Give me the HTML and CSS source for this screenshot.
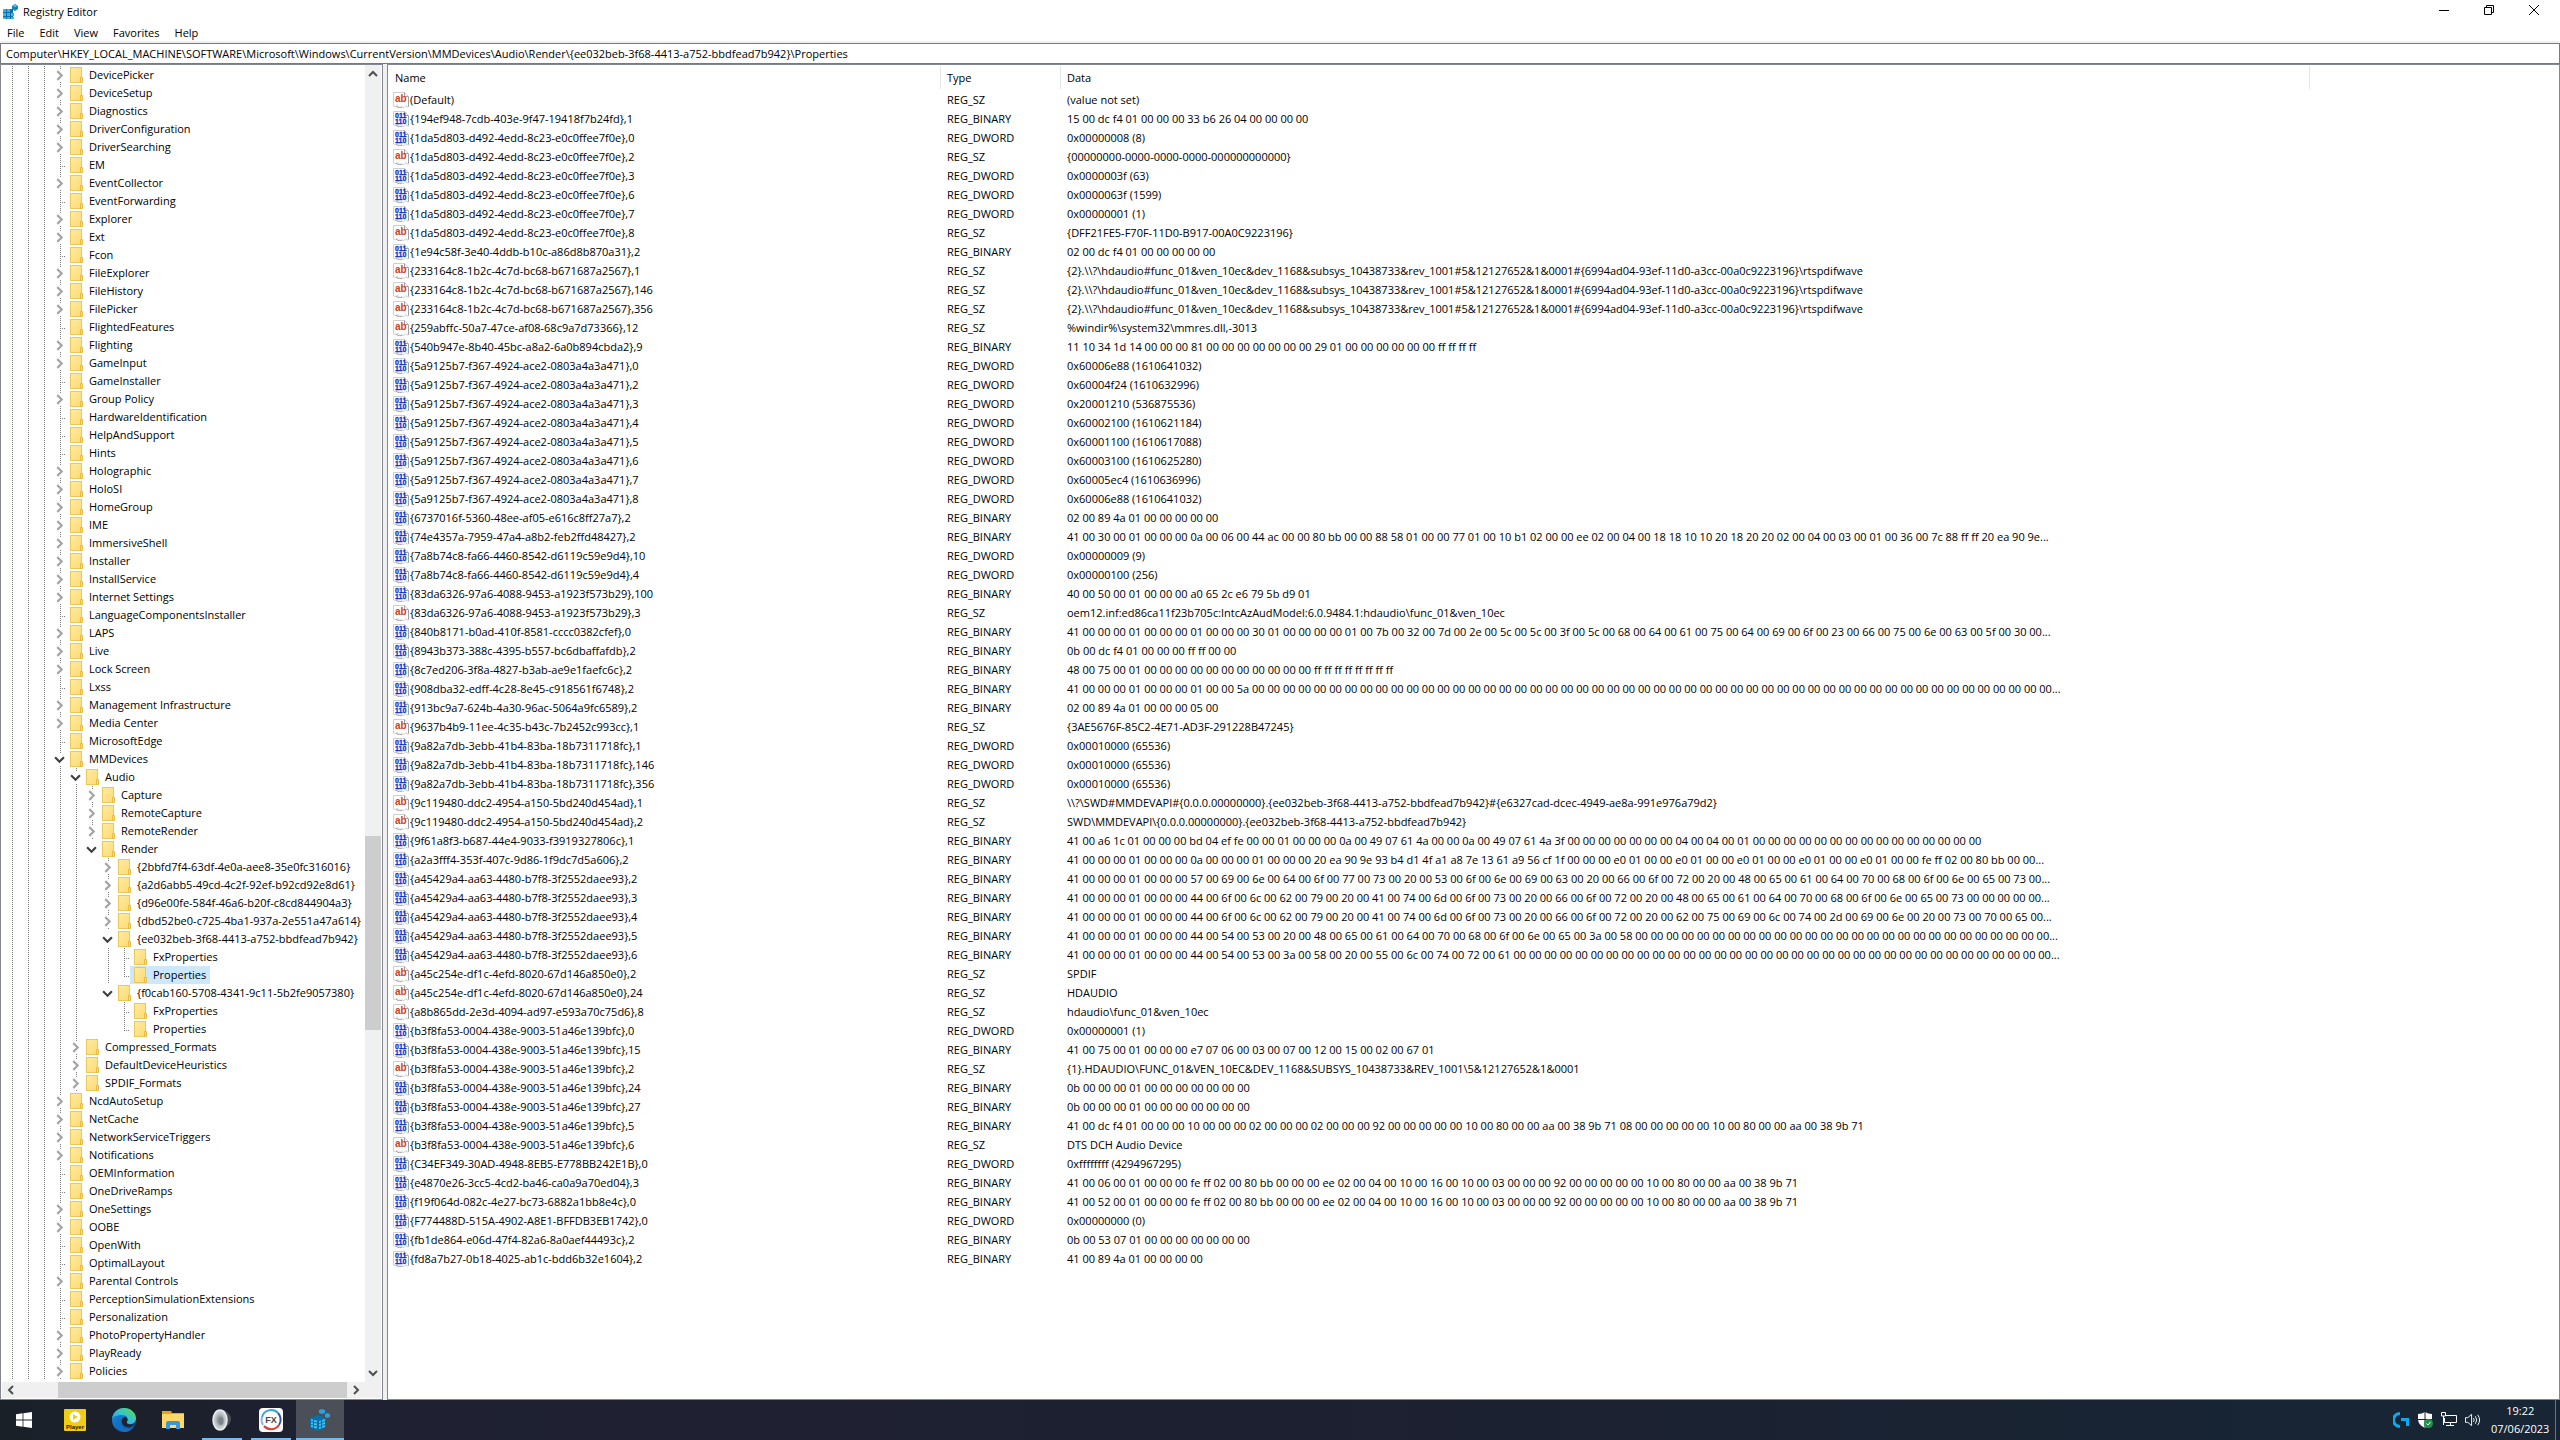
FILE: index.html
```html
<!DOCTYPE html>
<html lang="en">
<head>
<meta charset="utf-8">
<title>Registry Editor</title>
<link rel="stylesheet" href="styles.css">
</head>
<body>
<svg class="defs" aria-hidden="true">
  <defs>
    <linearGradient id="folder-fill" x1="0" y1="0" x2="1" y2="1"><stop offset="0" stop-color="#ffeba3"/><stop offset="1" stop-color="#fddb72"/></linearGradient>
    <linearGradient id="edge-a" x1="0" y1="1" x2="1" y2="0"><stop offset="0" stop-color="#1b9de2"/><stop offset=".5" stop-color="#35c1d0"/><stop offset="1" stop-color="#5be03f"/></linearGradient>
    <linearGradient id="edge-b" x1="0" y1="0" x2="1" y2="1"><stop offset="0" stop-color="#1b8fe0"/><stop offset="1" stop-color="#0b4a9c"/></linearGradient>
    <radialGradient id="cone"><stop offset="0" stop-color="#6c7378"/><stop offset=".5" stop-color="#aab1b5"/><stop offset="1" stop-color="#dfe3e5"/></radialGradient>
    <symbol id="folder" viewBox="0 0 13 16"><rect x=".5" y=".5" width="11" height="15" fill="url(#folder-fill)" stroke="#ecc75a"/><path d="M10.500 10.500h2v5h-2z" fill="#ffe288" stroke="#e6bb3f"/></symbol>
    <symbol id="page" viewBox="0 0 16 16"><path d="M.5.5h11l4 4v10.500h-1.500l-1-1.500-2 2-2-.5-2 .5-2-2-2 1-2.500-.5z" fill="#fff" stroke="#cfcfcf"/><path d="M11.500.5v4h4M15.500 5v9.500M3 14l2 1.500 2 .5 2-1" fill="none" stroke="#a0a0a0"/></symbol>
    <symbol id="string" viewBox="0 0 16 16"><use href="#page"/><text x="2" y="10" font-size="10" font-weight="700" fill="#d2401c">ab</text></symbol>
    <symbol id="binary" viewBox="0 0 16 16"><use href="#page"/><text x="2" y="7" font-size="7" font-weight="700" fill="#1230c8" stroke="#1230c8" stroke-width=".3">011</text><text x="2" y="13" font-size="7" font-weight="700" fill="#1230c8" stroke="#1230c8" stroke-width=".3">110</text></symbol>
    <symbol id="closed" viewBox="0 0 10 10"><path d="M3 1l4 4-4 4" fill="none" stroke="#a6a6a6" stroke-width="2"/></symbol>
    <symbol id="open" viewBox="0 0 10 10"><path d="M1 3l4 4 4-4" fill="none" stroke="#404040" stroke-width="2"/></symbol>
    <symbol id="arrow" viewBox="0 0 10 10"><path d="M1 7l4-4 4 4" fill="none" stroke="#505050" stroke-width="2"/></symbol>
  </defs>
</svg>

<div class="window">
  <header class="titlebar">
    <svg class="app-icon" viewBox="0 0 16 16"><path d="M1 5h10v10H1z" fill="#0c6fa8"/><path d="M1 5h3v3H1zM5 5h3v3H5zM1 9h3v3H1zM5 9h3v3H5zM1 13h3v2H1zM5 13h3v2H5zM9 9h3v3H9zM9 13h3v2H9z" fill="#35b4ea"/><path d="M13 0l3 2v3l-3 2-3-2V2z" fill="#1583bd"/><path d="M13 1l2 1-2 1-2-1z" fill="#6fd0f5"/></svg>
    <h1 class="title">Registry Editor</h1>
    <div class="window-buttons">
      <button class="win-btn" aria-label="Minimize"><svg viewBox="0 0 10 10"><path d="M0 5.500h10" stroke="#000"/></svg></button>
      <button class="win-btn" aria-label="Restore"><svg viewBox="0 0 10 10"><path d="M.5 2.500h7v7h-7zM2.500 2.500v-2h7v7h-2" fill="none" stroke="#000"/></svg></button>
      <button class="win-btn" aria-label="Close"><svg viewBox="0 0 10 10"><path d="M0 0l10 10M10 0L0 10" stroke="#000"/></svg></button>
    </div>
  </header>
  <nav class="menubar" aria-label="Menu">
    <button>File</button><button>Edit</button><button>View</button><button>Favorites</button><button>Help</button>
  </nav>
  <div class="address"><input class="address-input" aria-label="Address" value="Computer\HKEY_LOCAL_MACHINE\SOFTWARE\Microsoft\Windows\CurrentVersion\MMDevices\Audio\Render\{ee032beb-3f68-4413-a752-bbdfead7b942}\Properties"></div>

  <main class="panes">
    <section class="tree-pane" aria-label="Keys">
      <div class="tree-body">
        <div class="tree" id="tree" role="tree"></div>
        <div class="vscroll">
          <button aria-label="Scroll up"><svg><use href="#arrow"/></svg></button>
          <div class="vtrack"><div class="v-before"></div><div class="v-thumb"></div><div class="v-after"></div></div>
          <button aria-label="Scroll down"><svg class="down"><use href="#arrow"/></svg></button>
        </div>
      </div>
      <div class="hscroll">
        <button aria-label="Scroll left"><svg class="left"><use href="#arrow"/></svg></button>
        <div class="htrack"></div>
        <button aria-label="Scroll right"><svg class="right"><use href="#arrow"/></svg></button>
      </div>
    </section>
    <section class="list-pane" aria-label="Values">
      <table class="values">
        <colgroup><col class="c-name"><col class="c-type"><col class="c-data"><col></colgroup>
        <thead><tr><th>Name</th><th>Type</th><th>Data</th><td></td></tr></thead>
        <tbody id="values"></tbody>
      </table>
    </section>
  </main>
</div>

<footer class="taskbar">
  <button class="task start" aria-label="Start"><svg viewBox="0 0 16 16" width="16" height="16"><path d="M0 2.200L6.600 1.300v6.300H0zM7.400 1.200L16 0v7.600H7.400zM0 8.400h6.600v6.300L0 13.800zM7.400 8.400H16V16l-8.600-1.200z" fill="#fff"/></svg></button>
  <button class="task" aria-label="Player"><svg viewBox="0 0 22 22" width="22" height="22"><rect width="22" height="22" rx="1" fill="#f2cc0f"/><circle cx="11" cy="8" r="5.500" fill="#fff"/><path d="M9 5l5 3-5 3z" fill="#f2cc0f"/><text x="11" y="20" font-size="6" font-weight="700" text-anchor="middle" fill="#1c1a0a">Player</text></svg></button>
  <button class="task" aria-label="Microsoft Edge"><svg viewBox="0 0 24 24" width="24" height="24"><circle cx="12" cy="12" r="12" fill="url(#edge-b)"/><path d="M0 11C1 4 6 0 12 0c7 0 12 5 12 10 0 4-3 6-6 6-2 0-4-1-3-3 2-3-1-6-5-6-5 0-9 2-10 4z" fill="url(#edge-a)"/><path d="M9 10c-2 3-1 10 7 11 3 0 5-1 6-3-2 4-6 6-10 6-5-1-8-5-7-9 0-3 2-5 4-5z" fill="#1470c4"/><path d="M14 9c2 2 2 3 1 4.500-1 2 1 3 3.500 3 2 0 4-1 5-2.500-1 3-3 4-5 5-5 1-9-2-9-6 0-2 2-4 4.500-4z" fill="#1c2532"/></svg></button>
  <button class="task" aria-label="File Explorer"><svg viewBox="0 0 22 20" width="22" height="20"><path d="M0 1h9l1 2h12v15H0z" fill="#e8a317"/><path d="M0 4h22v14H0z" fill="#ffd868"/><path d="M4 19v-6q0-2 2-2h10q2 0 2 2v6h-4v-4H8v4z" fill="#3b97dd"/></svg></button>
  <button class="task running" aria-label="Sound"><svg viewBox="0 0 20 24" width="20" height="24"><path d="M7 2h5q7 4 7 9t-6 9l-4 2z" fill="#4a4e52"/><ellipse cx="8" cy="12" rx="7" ry="10" fill="url(#cone)" stroke="#e8ebed" stroke-width="1.500"/><ellipse cx="9" cy="13" rx="2.500" ry="4" fill="#7d858a"/></svg></button>
  <button class="task running" aria-label="FX"><svg viewBox="0 0 24 24" width="24" height="24"><rect width="24" height="24" rx="4" fill="#fff"/><path d="M4 17A9.500 9.500 0 0 1 3 9" fill="none" stroke="#8fb7d9" stroke-width="2"/><path d="M3 9A9.500 9.500 0 0 1 19 5" fill="none" stroke="#35a3d8" stroke-width="2"/><path d="M19 5a9.500 9.500 0 0 1 1 12" fill="none" stroke="#32529c" stroke-width="2"/><path d="M20 17A9.500 9.500 0 0 1 5 18" fill="none" stroke="#e23a2e" stroke-width="2"/><text x="12" y="15" font-size="9" font-weight="700" text-anchor="middle" fill="#444">FX</text></svg></button>
  <button class="task running active" aria-label="Registry Editor"><svg viewBox="0 0 20 22" width="20" height="22"><path d="M0 9l8-3 8 3v9l-8 4-8-3z" fill="#0b6ea8"/><path d="M1 10l2 .5v2l-2-.5zM4 11l3 .5v2L4 13zM1 13l2 .5v2L1 15zM4 14l3 .5v2L4 16zM1 16l2 .5v2L1 18zM4 17l3 .5v2L4 19zM9 12l2-.5v2L9 14zM12 11l3-1v2l-3 1zM9 15l2-.5v2L9 17zM12 14l3-1v2l-3 1zM9 18l2-.5v2L9 20zM12 17l3-1v2l-3 1z" fill="#3fc0f2"/><path d="M12 0l3 1v3l-3 1-3-1V1zM17 4l3 1v3l-3 1-2-1V5z" fill="#2aa3dc"/></svg></button>
  <div class="tray">
    <div class="tray-icons">
      <svg viewBox="0 0 16 16" width="16" height="16"><path d="M7 1.500A6.500 6.500 0 0 0 7 14.500M8 7.500h6.500V14" fill="none" stroke="#10a8e8" stroke-width="3"/></svg>
      <svg viewBox="0 0 16 16" width="16" height="16"><path d="M8 0q3 2 7 2v5q0 6-7 9-7-3-7-9V2q4 0 7-2z" fill="#fff"/><path d="M8 0v16M1 7.500h14" stroke="#172534" stroke-width="1"/><circle cx="11.500" cy="11.500" r="4.500" fill="#17964a"/><path d="M9.500 11.500l1.500 1.500 2.500-3" fill="none" stroke="#fff"/></svg>
      <svg viewBox="0 0 16 16" width="16" height="16"><path d="M5 3.500h10.500v7H3.500V6M.5.500h4v3.500h-4zM2.500 4v9M5 13.500h8M9.500 11v2" fill="none" stroke="#fff"/></svg>
      <svg viewBox="0 0 17 16" width="16" height="16"><path d="M.5 5.500h2.500l4-3.500v12l-4-3.500H.5z" fill="none" stroke="#fff"/><path d="M9 6q1.500 2 0 4M11 4q3 4 0 8M13.500 2.500q4 5.500 0 11" fill="none" stroke="#fff"/></svg>
    </div>
    <div class="clock"><time>19:22</time><time>07/06/2023</time></div>
    <button class="desktop" aria-label="Show desktop"></button>
  </div>
</footer>
<script src="app.js"></script>
</body>
</html>
```
FILE: styles.css
```css
* { box-sizing: border-box; }
body {
  margin: 0;
  height: 100vh;
  display: flex;
  flex-direction: column;
  overflow: hidden;
  background: #fff;
  color: #000;
  font: 11px/18px "Open Sans", "Noto Sans", sans-serif;
}
button { margin: 0; padding: 0; border: 0; background: none; color: inherit; font: inherit; }
svg { display: block; flex: none; }
.defs { position: absolute; width: 0; height: 0; }

.window { flex: 1; min-height: 0; display: flex; flex-direction: column; }
.titlebar { display: flex; align-items: center; height: 24px; padding: 0 4px 0 2px; flex: none; }
.app-icon { width: 16px; height: 16px; }
.title { margin: 0 0 0 5px; font-size: 11px; font-weight: 400; }
.window-buttons { display: flex; align-self: flex-start; margin-left: auto; height: 20px; }
.win-btn { width: 45px; display: grid; place-items: center; }
.win-btn svg { width: 10px; height: 10px; }
.menubar { display: flex; gap: 15px; height: 17px; padding-left: 7px; flex: none; }
.address { border-top: 2px solid #f0f0f0; flex: none; }
.address-input {
  display: block; width: 100%; height: 21px; padding: 0 5px;
  border: 1px solid #7a7a7a; background: #fff; color: #000; font: inherit;
}

.panes { flex: 1; min-height: 0; display: flex; gap: 4px; background: #f0f0f0; }
.tree-pane { width: 383px; flex: none; display: flex; flex-direction: column; border: 1px solid #828790; background: #fff; padding: 0 1px 1px; }
.tree-body { flex: 1; min-height: 0; display: flex; }
.tree { flex: 1; min-width: 0; overflow: hidden; padding: 1px 0 0 2px; }
.node { display: flex; height: 18px; white-space: nowrap; }
.guide, .twisty { flex: none; display: grid; align-items: center; }
.guide { width: 16px; }
.twisty { width: 14px; padding-left: 2px; }
.line, .stub { background-repeat: no-repeat; }
.line { background-image: repeating-linear-gradient(#7c7c7c 0 1px, transparent 1px 2px); background-size: 1px 100%; background-position: 8px 0; }
.stub { background-image: repeating-linear-gradient(#7c7c7c 0 1px, transparent 1px 2px), repeating-linear-gradient(90deg, #7c7c7c 0 1px, transparent 1px 2px); background-size: 1px 100%, 6px 1px; background-position: 8px 0, 8px 10px; }
.stub.last { background-size: 1px 10px, 6px 1px; }
.twisty svg { width: 11px; height: 11px; background: #fff; }
.key { display: flex; align-items: center; gap: 6px; padding: 0 4px; }
.key svg { width: 13px; height: 16px; }
.key.selected { background: #cce8ff; }

.vscroll, .hscroll { display: flex; background: #f0f0f0; flex: none; }
.vscroll { width: 16px; flex-direction: column; }
.vscroll svg, .hscroll svg { width: 10px; height: 10px; }
.vscroll button, .hscroll button { display: grid; place-items: center; flex: none; }
.vscroll button { height: 18px; }
.vtrack { flex: 1; display: flex; flex-direction: column; }
.v-before { flex: 752; }
.v-thumb { flex: 194; background: #cdcdcd; }
.v-after { flex: 334; }
.hscroll { height: 16px; padding-right: 17px; }
.hscroll button { width: 17px; }
.htrack { flex: 1; margin-left: 39px; background: #cdcdcd; }
.down { transform: rotate(180deg); }
.left { transform: rotate(-90deg); }
.right { transform: rotate(90deg); }

.list-pane { flex: 1; min-width: 0; border: 1px solid #828790; background: #fff; overflow: hidden; }
.values { width: 100%; table-layout: fixed; border-collapse: separate; border-spacing: 0; }
.c-name { width: 553px; }
.c-type { width: 120px; }
.c-data { width: 1249px; }
.values th { height: 25px; padding: 1px 6px 0; font-weight: 400; text-align: left; background: linear-gradient(#e5e5e5, #e5e5e5) right 1px / 1px 23px no-repeat; }
.values th:first-child { padding-left: 7px; }
.values td { height: 19px; padding: 0 6px; white-space: nowrap; }
.values tbody td:first-child { padding-left: 5px; }
.value-name { display: flex; align-items: center; gap: 1px; height: 19px; }
.value-name svg { width: 16px; height: 16px; font-family: "Liberation Sans", sans-serif; }

.taskbar { flex: none; height: 40px; display: flex; color: #fff; background: linear-gradient(90deg, #1a2028 0, #1f2133 16%, #1d2030 50%, #172534 92%, #172534 100%); }
.task { width: 48px; margin-right: 1px; display: grid; place-items: center; font-family: "Liberation Sans", sans-serif; }
.start { margin-right: 3px; }
.running { background: linear-gradient(#76b9ed, #76b9ed) center bottom / 40px 2px no-repeat; }
.active { background: linear-gradient(#76b9ed, #76b9ed) center bottom / 48px 2px no-repeat #4a4f58; }
.tray { margin-left: auto; display: flex; align-items: center; }
.tray-icons { display: flex; gap: 8px; }
.clock { width: 58px; margin: 0 6px 0 10px; display: grid; justify-items: center; }
.desktop { width: 5px; height: 40px; border-left: 1px solid #6b757e; }
```
FILE: app.js
```js
// Keys: depth, state (+ closed, - open, . no subkeys), name. A trailing * marks the selected key.
const keys = `3+DevicePicker
3+DeviceSetup
3+Diagnostics
3+DriverConfiguration
3+DriverSearching
3.EM
3+EventCollector
3.EventForwarding
3+Explorer
3+Ext
3.Fcon
3+FileExplorer
3+FileHistory
3+FilePicker
3.FlightedFeatures
3+Flighting
3+GameInput
3.GameInstaller
3+Group Policy
3.HardwareIdentification
3.HelpAndSupport
3.Hints
3+Holographic
3+HoloSI
3+HomeGroup
3+IME
3+ImmersiveShell
3+Installer
3+InstallService
3+Internet Settings
3.LanguageComponentsInstaller
3+LAPS
3+Live
3+Lock Screen
3.Lxss
3+Management Infrastructure
3+Media Center
3.MicrosoftEdge
3-MMDevices
4-Audio
5+Capture
5+RemoteCapture
5+RemoteRender
5-Render
6+{2bbfd7f4-63df-4e0a-aee8-35e0fc316016}
6+{a2d6abb5-49cd-4c2f-92ef-b92cd92e8d61}
6+{d96e00fe-584f-46a6-b20f-c8cd844904a3}
6+{dbd52be0-c725-4ba1-937a-2e551a47a614}
6-{ee032beb-3f68-4413-a752-bbdfead7b942}
7.FxProperties
7.Properties*
6-{f0cab160-5708-4341-9c11-5b2fe9057380}
7.FxProperties
7.Properties
4+Compressed_Formats
4+DefaultDeviceHeuristics
4+SPDIF_Formats
3+NcdAutoSetup
3+NetCache
3+NetworkServiceTriggers
3+Notifications
3.OEMInformation
3.OneDriveRamps
3+OneSettings
3+OOBE
3.OpenWith
3.OptimalLayout
3+Parental Controls
3.PerceptionSimulationExtensions
3.Personalization
3+PhotoPropertyHandler
3+PlayReady
3+Policies`.split('\n').map(s => ({ depth: +s[0], state: s[1], name: s.slice(2).replace('*', ''), selected: s.endsWith('*') }));

// True when a sibling at this depth follows row i.
function continues(i, depth) {
  for (let j = i + 1; j < keys.length; j++) {
    if (keys[j].depth < depth) return false;
    if (keys[j].depth === depth) return true;
  }
  return depth <= 3;
}

document.getElementById('tree').innerHTML = keys.map((k, i) => {
  let row = '';
  for (let d = 0; d < k.depth; d++) row += `<span class="guide${continues(i, d) || d < 3 ? ' line' : ''}"></span>`;
  if (k.state === '.') row += `<span class="twisty stub${continues(i, k.depth) ? '' : ' last'}"></span>`;
  else row += `<button class="twisty${k.state === '+' || k.depth < 5 ? ' line' : ''}" aria-label="${k.state === '+' ? 'Expand' : 'Collapse'}"><svg><use href="#${k.state === '+' ? 'closed' : 'open'}"/></svg></button>`;
  return `<div class="node" role="treeitem">${row}<span class="key${k.selected ? ' selected' : ''}"><svg><use href="#folder"/></svg>${k.name}</span></div>`;
}).join('');

// Value data helpers: "B" binary, "D" dword, "S" string.
const zeros = n => ' 00'.repeat(n);
const wide = text => [...text].map(c => ' ' + c.charCodeAt(0).toString(16) + ' 00').join('');
const variant = text => '41 00 00 00 01 00 00 00' + wide(text) + zeros(56 - text.length * 2) + '...';
const spdif = '{2}.\\\\?\\hdaudio#func_01&ven_10ec&dev_1168&subsys_10438733&rev_1001#5&12127652&1&0001#{6994ad04-93ef-11d0-a3cc-00a0c9223196}\\rtspdifwave';
const format = '01 00 00 00 fe ff 02 00 80 bb 00 00 00 ee 02 00 04 00 10 00 16 00 10 00 03 00 00 00 92 00 00 00 00 00 10 00 80 00 00 aa 00 38 9b 71';
const types = { B: 'REG_BINARY', D: 'REG_DWORD', S: 'REG_SZ' };
const values = [
  ['(Default)', 'S', '(value not set)'],
  ['{194ef948-7cdb-403e-9f47-19418f7b24fd},1', 'B', '15 00 dc f4 01 00 00 00 33 b6 26 04 00 00 00 00'],
  ['{1da5d803-d492-4edd-8c23-e0c0ffee7f0e},0', 'D', '0x00000008 (8)'],
  ['{1da5d803-d492-4edd-8c23-e0c0ffee7f0e},2', 'S', '{00000000-0000-0000-0000-000000000000}'],
  ['{1da5d803-d492-4edd-8c23-e0c0ffee7f0e},3', 'D', '0x0000003f (63)'],
  ['{1da5d803-d492-4edd-8c23-e0c0ffee7f0e},6', 'D', '0x0000063f (1599)'],
  ['{1da5d803-d492-4edd-8c23-e0c0ffee7f0e},7', 'D', '0x00000001 (1)'],
  ['{1da5d803-d492-4edd-8c23-e0c0ffee7f0e},8', 'S', '{DFF21FE5-F70F-11D0-B917-00A0C9223196}'],
  ['{1e94c58f-3e40-4ddb-b10c-a86d8b870a31},2', 'B', '02 00 dc f4 01 00 00 00 00 00'],
  ['{233164c8-1b2c-4c7d-bc68-b671687a2567},1', 'S', spdif],
  ['{233164c8-1b2c-4c7d-bc68-b671687a2567},146', 'S', spdif],
  ['{233164c8-1b2c-4c7d-bc68-b671687a2567},356', 'S', spdif],
  ['{259abffc-50a7-47ce-af08-68c9a7d73366},12', 'S', '%windir%\\system32\\mmres.dll,-3013'],
  ['{540b947e-8b40-45bc-a8a2-6a0b894cbda2},9', 'B', '11 10 34 1d 14 00 00 00 81 00 00 00 00 00 00 00 29 01 00 00 00 00 00 00 ff ff ff ff'],
  ['{5a9125b7-f367-4924-ace2-0803a4a3a471},0', 'D', '0x60006e88 (1610641032)'],
  ['{5a9125b7-f367-4924-ace2-0803a4a3a471},2', 'D', '0x60004f24 (1610632996)'],
  ['{5a9125b7-f367-4924-ace2-0803a4a3a471},3', 'D', '0x20001210 (536875536)'],
  ['{5a9125b7-f367-4924-ace2-0803a4a3a471},4', 'D', '0x60002100 (1610621184)'],
  ['{5a9125b7-f367-4924-ace2-0803a4a3a471},5', 'D', '0x60001100 (1610617088)'],
  ['{5a9125b7-f367-4924-ace2-0803a4a3a471},6', 'D', '0x60003100 (1610625280)'],
  ['{5a9125b7-f367-4924-ace2-0803a4a3a471},7', 'D', '0x60005ec4 (1610636996)'],
  ['{5a9125b7-f367-4924-ace2-0803a4a3a471},8', 'D', '0x60006e88 (1610641032)'],
  ['{6737016f-5360-48ee-af05-e616c8ff27a7},2', 'B', '02 00 89 4a 01 00 00 00 00 00'],
  ['{74e4357a-7959-47a4-a8b2-feb2ffd48427},2', 'B', '41 00 30 00 01 00 00 00 0a 00 06 00 44 ac 00 00 80 bb 00 00 88 58 01 00 00 77 01 00 10 b1 02 00 00 ee 02 00 04 00 18 18 10 10 20 18 20 20 02 00 04 00 03 00 01 00 36 00 7c 88 ff ff 20 ea 90 9e...'],
  ['{7a8b74c8-fa66-4460-8542-d6119c59e9d4},10', 'D', '0x00000009 (9)'],
  ['{7a8b74c8-fa66-4460-8542-d6119c59e9d4},4', 'D', '0x00000100 (256)'],
  ['{83da6326-97a6-4088-9453-a1923f573b29},100', 'B', '40 00 50 00 01 00 00 00 a0 65 2c e6 79 5b d9 01'],
  ['{83da6326-97a6-4088-9453-a1923f573b29},3', 'S', 'oem12.inf:ed86ca11f23b705c:IntcAzAudModel:6.0.9484.1:hdaudio\\func_01&ven_10ec'],
  ['{840b8171-b0ad-410f-8581-cccc0382cfef},0', 'B', '41 00 00 00 01 00 00 00 01 00 00 00 30 01 00 00 00 00 01 00' + wide('{2}.\\\\?\\hdaudio#func_0') + '...'],
  ['{8943b373-388c-4395-b557-bc6dbaffafdb},2', 'B', '0b 00 dc f4 01 00 00 00 ff ff 00 00'],
  ['{8c7ed206-3f8a-4827-b3ab-ae9e1faefc6c},2', 'B', '48 00 75 00 01 00 00 00 00 00 00 00 00 00 00 00 ff ff ff ff ff ff ff ff'],
  ['{908dba32-edff-4c28-8e45-c918561f6748},2', 'B', '41 00 00 00 01 00 00 00 01 00 00 5a' + zeros(52) + '...'],
  ['{913bc9a7-624b-4a30-96ac-5064a9fc6589},2', 'B', '02 00 89 4a 01 00 00 00 05 00'],
  ['{9637b4b9-11ee-4c35-b43c-7b2452c993cc},1', 'S', '{3AE5676F-85C2-4E71-AD3F-291228B47245}'],
  ['{9a82a7db-3ebb-41b4-83ba-18b7311718fc},1', 'D', '0x00010000 (65536)'],
  ['{9a82a7db-3ebb-41b4-83ba-18b7311718fc},146', 'D', '0x00010000 (65536)'],
  ['{9a82a7db-3ebb-41b4-83ba-18b7311718fc},356', 'D', '0x00010000 (65536)'],
  ['{9c119480-ddc2-4954-a150-5bd240d454ad},1', 'S', '\\\\?\\SWD#MMDEVAPI#{0.0.0.00000000}.{ee032beb-3f68-4413-a752-bbdfead7b942}#{e6327cad-dcec-4949-ae8a-991e976a79d2}'],
  ['{9c119480-ddc2-4954-a150-5bd240d454ad},2', 'S', 'SWD\\MMDEVAPI\\{0.0.0.00000000}.{ee032beb-3f68-4413-a752-bbdfead7b942}'],
  ['{9f61a8f3-b687-44e4-9033-f3919327806c},1', 'B', '41 00 a6 1c 01 00 00 00 bd 04 ef fe 00 00 01 00 00 00 0a 00 49 07 61 4a 00 00 0a 00 49 07 61 4a 3f 00 00 00 00 00 00 00 04 00 04 00 01' + zeros(15)],
  ['{a2a3fff4-353f-407c-9d86-1f9dc7d5a606},2', 'B', '41 00 00 00 01 00 00 00 0a 00 00 00 01 00 00 00 20 ea 90 9e 93 b4 d1 4f a1 a8 7e 13 61 a9 56 cf 1f 00 00 00 e0 01 00 00 e0 01 00 00 e0 01 00 00 e0 01 00 00 e0 01 00 00 fe ff 02 00 80 bb 00 00...'],
  ['{a45429a4-aa63-4480-b7f8-3f2552daee93},2', 'B', variant('Windows Sonic for Headphones')],
  ['{a45429a4-aa63-4480-b7f8-3f2552daee93},3', 'B', variant('Dolby Atmos for Headphones')],
  ['{a45429a4-aa63-4480-b7f8-3f2552daee93},4', 'B', variant('Dolby Atmos for built-in spe')],
  ['{a45429a4-aa63-4480-b7f8-3f2552daee93},5', 'B', variant('DTS Headphone:X')],
  ['{a45429a4-aa63-4480-b7f8-3f2552daee93},6', 'B', variant('DTS:X Ultra')],
  ['{a45c254e-df1c-4efd-8020-67d146a850e0},2', 'S', 'SPDIF'],
  ['{a45c254e-df1c-4efd-8020-67d146a850e0},24', 'S', 'HDAUDIO'],
  ['{a8b865dd-2e3d-4094-ad97-e593a70c75d6},8', 'S', 'hdaudio\\func_01&ven_10ec'],
  ['{b3f8fa53-0004-438e-9003-51a46e139bfc},0', 'D', '0x00000001 (1)'],
  ['{b3f8fa53-0004-438e-9003-51a46e139bfc},15', 'B', '41 00 75 00 01 00 00 00 e7 07 06 00 03 00 07 00 12 00 15 00 02 00 67 01'],
  ['{b3f8fa53-0004-438e-9003-51a46e139bfc},2', 'S', '{1}.HDAUDIO\\FUNC_01&VEN_10EC&DEV_1168&SUBSYS_10438733&REV_1001\\5&12127652&1&0001'],
  ['{b3f8fa53-0004-438e-9003-51a46e139bfc},24', 'B', '0b 00 00 00 01 00 00 00 00 00 00 00'],
  ['{b3f8fa53-0004-438e-9003-51a46e139bfc},27', 'B', '0b 00 00 00 01 00 00 00 00 00 00 00'],
  ['{b3f8fa53-0004-438e-9003-51a46e139bfc},5', 'B', '41 00 dc f4 01 00 00 00 10 00 00 00 02 00 00 00 02 00 00 00 92 00 00 00 00 00 10 00 80 00 00 aa 00 38 9b 71 08 00 00 00 00 00 10 00 80 00 00 aa 00 38 9b 71'],
  ['{b3f8fa53-0004-438e-9003-51a46e139bfc},6', 'S', 'DTS DCH Audio Device'],
  ['{C34EF349-30AD-4948-8EB5-E778BB242E1B},0', 'D', '0xffffffff (4294967295)'],
  ['{e4870e26-3cc5-4cd2-ba46-ca0a9a70ed04},3', 'B', '41 00 06 00 ' + format],
  ['{f19f064d-082c-4e27-bc73-6882a1bb8e4c},0', 'B', '41 00 52 00 ' + format],
  ['{F774488D-515A-4902-A8E1-BFFDB3EB1742},0', 'D', '0x00000000 (0)'],
  ['{fb1de864-e06d-47f4-82a6-8a0aef44493c},2', 'B', '0b 00 53 07 01 00 00 00 00 00 00 00'],
  ['{fd8a7b27-0b18-4025-ab1c-bdd6b32e1604},2', 'B', '41 00 89 4a 01 00 00 00 00']
];
const escape = s => s.replace(/&/g, '&amp;');
document.getElementById('values').innerHTML = values.map(([name, type, data]) =>
  `<tr><td><div class="value-name"><svg><use href="#${type === 'S' ? 'string' : 'binary'}"/></svg>${name}</div></td><td>${types[type]}</td><td>${escape(data)}</td><td></td></tr>`
).join('');
```
